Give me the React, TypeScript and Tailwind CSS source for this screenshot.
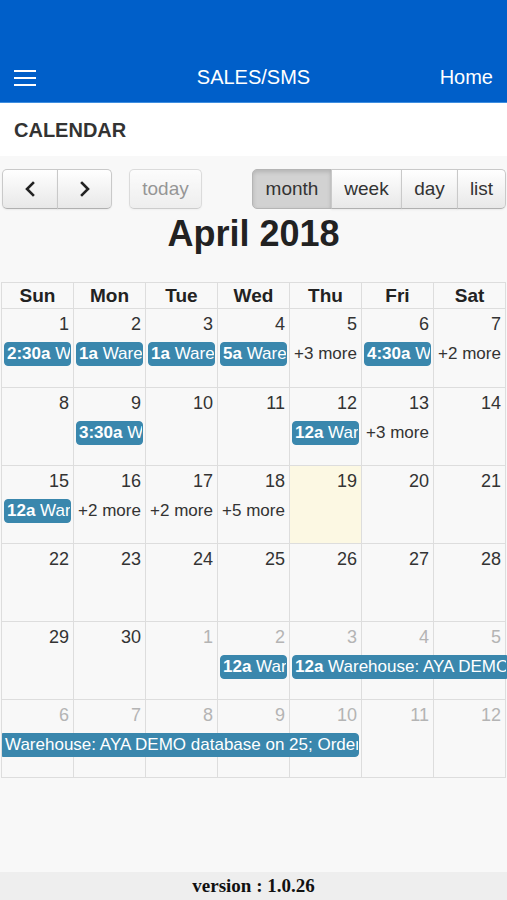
import React from 'react'

type Day = { n: number; other?: boolean; today?: boolean }
type Item =
  | { kind: 'event'; col: number; span: number; time?: string; start: boolean; end: boolean }
  | { kind: 'more'; col: number; count: number }

interface Week {
  days: Day[];
  items: Item[];
  tall?: boolean;
}

const colStart = ['', 'col-start-1', 'col-start-2', 'col-start-3', 'col-start-4', 'col-start-5', 'col-start-6', 'col-start-7']
const colSpan = ['', 'col-span-1', 'col-span-2', 'col-span-3', 'col-span-4', 'col-span-5', 'col-span-6', 'col-span-7']

const TITLE = 'Warehouse: AYA DEMO database on 25; Order received'

const range = (from: number, to: number, other = false): Day[] =>
  Array.from({ length: to - from + 1 }, (_, i) => ({ n: from + i, other }))

const ev = (col: number, time: string): Item => ({ kind: 'event', col, span: 1, time, start: true, end: true })
const more = (col: number, count: number): Item => ({ kind: 'more', col, count })

const weeks: Week[] = [
  {
    days: range(1, 7),
    tall: true,
    items: [ev(1, '2:30a'), ev(2, '1a'), ev(3, '1a'), ev(4, '5a'), more(5, 3), ev(6, '4:30a'), more(7, 2)],
  },
  { days: range(8, 14), items: [ev(2, '3:30a'), ev(5, '12a'), more(6, 3)] },
  {
    days: range(15, 21).map((d) => (d.n === 19 ? { ...d, today: true } : d)),
    items: [ev(1, '12a'), more(2, 2), more(3, 2), more(4, 5)],
  },
  { days: range(22, 28), items: [] },
  {
    days: [...range(29, 30), ...range(1, 5, true)],
    items: [ev(4, '12a'), { kind: 'event', col: 5, span: 3, time: '12a', start: true, end: false }],
  },
  {
    days: range(6, 12, true),
    items: [{ kind: 'event', col: 1, span: 5, start: false, end: true }],
  },
]

const dayNames = ['Sun', 'Mon', 'Tue', 'Wed', 'Thu', 'Fri', 'Sat']

function Chevron({ left }: { left?: boolean }) {
  return (
    <svg width="12" height="16" viewBox="0 0 12 16" fill="none">
      <path
        d={left ? 'M9 2 L3 8 L9 14' : 'M3 2 L9 8 L3 14'}
        stroke="#222"
        strokeWidth="2.6"
        strokeLinecap="square"
      />
    </svg>
  )
}

const btn =
  'h-[40px] flex items-center justify-center border border-[#c9c9c9] border-b-[#b0b0b0] bg-gradient-to-b from-white to-[#e8e8e8] text-[19px] text-[#333] shadow-[0_1px_2px_rgba(0,0,0,0.06)]'

function WeekRow({ week }: { week: Week }) {
  return (
    <div className={`grid grid-cols-7 grid-rows-[33px_24px_1fr] ${week.tall ? 'h-[79px]' : 'h-[78px]'}`}>
      {week.days.map((d, i) => (
        <div
          key={i}
          className={`${colStart[i + 1]} row-start-1 row-end-4 border-r border-b border-[#ddd] pt-[4px] pr-[4px] text-right text-[18px] leading-[22px] ${
            d.other ? 'text-[#b4b4b4]' : 'text-[#333]'
          } ${d.today ? 'bg-[#fcf8e3]' : ''}`}
        >
          {d.n}
        </div>
      ))}
      {week.items.map((it, i) =>
        it.kind === 'more' ? (
          <div
            key={i}
            className={`${colStart[it.col]} row-start-2 pl-[4px] flex items-center text-[17px] text-[#333] whitespace-nowrap overflow-hidden`}
          >
            +{it.count} more
          </div>
        ) : (
          <div
            key={i}
            className={`${colStart[it.col]} ${colSpan[it.span]} row-start-2 min-w-0 ${it.start ? 'ml-[2px] rounded-l-[4px]' : 'ml-0'} ${
              it.end ? 'mr-[3px] rounded-r-[4px]' : '-mr-[1px]'
            } bg-[#3a87ad] border border-[#3a87ad] text-white text-[17px] leading-[22px] px-[2px] whitespace-nowrap overflow-hidden`}
          >
            {it.time && <span className="font-bold">{it.time} </span>}
            {TITLE}
          </div>
        )
      )}
    </div>
  )
}

export default function App() {
  return (
    <div className="h-[900px] w-full flex flex-col font-['Liberation_Sans',Arial,sans-serif] bg-[#f8f8f8] overflow-hidden">
      <header className="h-[103px] shrink-0 bg-[#005fc9] border-b border-[#3e8ee0] flex items-end">
        <div className="h-[50px] w-full grid grid-cols-[1fr_auto_1fr] items-center px-[14px] text-white">
          <svg width="22" height="16" viewBox="0 0 22 16" className="mt-[1px]">
            <rect x="0" y="0" width="22" height="2" fill="white" />
            <rect x="0" y="7" width="22" height="2" fill="white" />
            <rect x="0" y="14" width="22" height="2" fill="white" />
          </svg>
          <div className="text-[20px]">SALES/SMS</div>
          <div className="text-[20px] text-right">Home</div>
        </div>
      </header>

      <div className="h-[53px] shrink-0 bg-white flex items-center px-[14px]">
        <h1 className="text-[20px] font-bold text-[#333]">CALENDAR</h1>
      </div>

      <main className="flex-1 pt-[13px]">
        <div className="flex items-center pl-[2px] pr-[1px]">
          <div className="flex w-[111px]">
            <button className={`${btn} w-[56px] rounded-l-[5px]`}>
              <Chevron left />
            </button>
            <button className={`${btn} w-[55px] -ml-px rounded-r-[5px]`}>
              <Chevron />
            </button>
          </div>
          <button className={`${btn} ml-[16px] w-[73px] rounded-[5px] opacity-60 text-[#555]`}>today</button>
          <div className="ml-auto flex">
            <button className="h-[40px] w-[80px] rounded-l-[5px] border border-[#b5b5b5] bg-[#d2d2d2] text-[19px] text-[#333] shadow-[inset_0_2px_4px_rgba(0,0,0,0.15)]">
              month
            </button>
            <button className={`${btn} w-[71px] -ml-px`}>week</button>
            <button className={`${btn} w-[57px] -ml-px`}>day</button>
            <button className={`${btn} w-[49px] -ml-px rounded-r-[5px]`}>list</button>
          </div>
        </div>

        <h2 className="mt-[3px] h-[44px] leading-[44px] text-center text-[36px] font-bold text-[#222]">April 2018</h2>

        <div className="mt-[26px] ml-[1px] w-[505px] border-t border-l border-[#ddd]">
          <div className="grid grid-cols-7 h-[26px]">
            {dayNames.map((n) => (
              <div
                key={n}
                className="border-r border-b border-[#ddd] text-center text-[19px] font-bold text-[#222] leading-[25px]"
              >
                {n}
              </div>
            ))}
          </div>
          {weeks.map((w, i) => (
            <WeekRow key={i} week={w} />
          ))}
        </div>
      </main>

      <footer className="h-[28px] shrink-0 bg-[#eeeeee] flex items-center justify-center">
        <span className="font-['Liberation_Serif','Times_New_Roman',serif] font-bold text-[19px] text-[#111]">
          version : 1.0.26
        </span>
      </footer>
    </div>
  )
}
